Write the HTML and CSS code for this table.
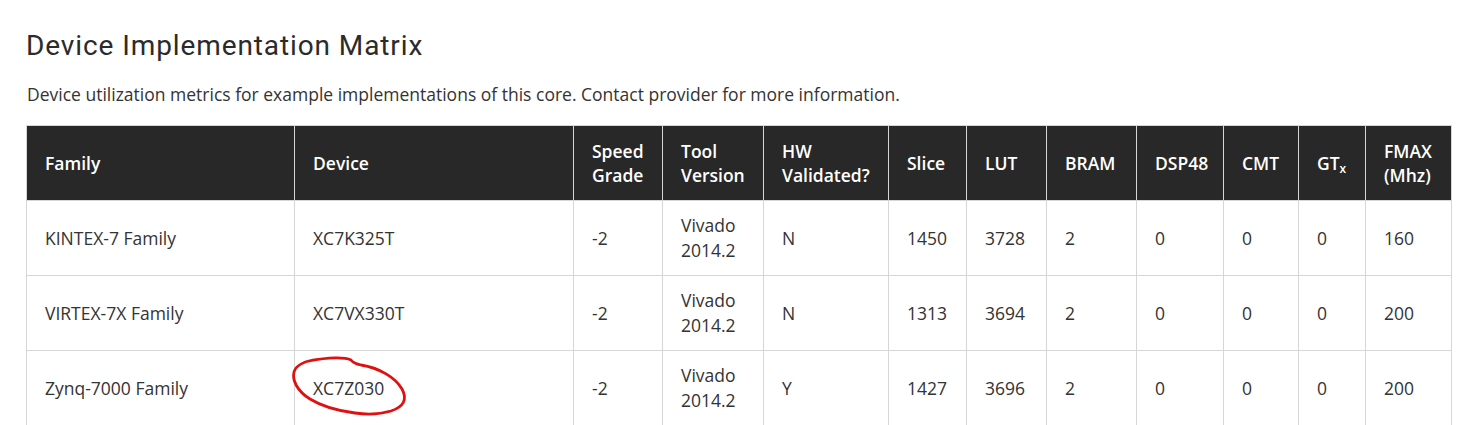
FILE: index.html
```html
<!DOCTYPE html>
<html>
<head>
<meta charset="utf-8">
<link rel="stylesheet" href="styles.css">
</head>
<body>
<div class="page">
  <h1 class="title">Device Implementation Matrix</h1>
  <p class="desc">Device utilization metrics for example implementations of this core. Contact provider for more information.</p>
  <table class="matrix">
    <colgroup>
      <col style="width:268px"><col style="width:279px"><col style="width:89px"><col style="width:101px"><col style="width:125px"><col style="width:78px"><col style="width:80px"><col style="width:90px"><col style="width:87px"><col style="width:75px"><col style="width:67px"><col style="width:86px">
    </colgroup>
    <thead>
      <tr>
        <th>Family</th><th>Device</th><th>Speed<br>Grade</th><th>Tool<br>Version</th><th>HW<br>Validated?</th><th>Slice</th><th>LUT</th><th>BRAM</th><th>DSP48</th><th>CMT</th><th>GT<sub>x</sub></th><th>FMAX<br>(Mhz)</th>
      </tr>
    </thead>
    <tbody>
      <tr>
        <td>KINTEX-7 Family</td><td>XC7K325T</td><td>-2</td><td>Vivado<br>2014.2</td><td>N</td><td>1450</td><td>3728</td><td>2</td><td>0</td><td>0</td><td>0</td><td>160</td>
      </tr>
      <tr>
        <td>VIRTEX-7X Family</td><td>XC7VX330T</td><td>-2</td><td>Vivado<br>2014.2</td><td>N</td><td>1313</td><td>3694</td><td>2</td><td>0</td><td>0</td><td>0</td><td>200</td>
      </tr>
      <tr>
        <td>Zynq-7000 Family</td><td class="marked">XC7Z030<svg class="circle" width="124" height="66" viewBox="0 0 124 66"><path d="M20 6 C 40 2, 56 2, 62 5 C 64 8, 67 9, 72 10 C 90 13, 106 22, 113 34 C 119 45, 114 52, 102 56 C 92 59, 80 60, 66 58 C 50 56, 34 52, 21 44 C 8 36, 3 25, 5 17 C 7 10, 14 7, 24 5" fill="none" stroke="#e01010" stroke-width="2.8" stroke-linecap="round" stroke-linejoin="round"/></svg></td><td>-2</td><td>Vivado<br>2014.2</td><td>Y</td><td>1427</td><td>3696</td><td>2</td><td>0</td><td>0</td><td>0</td><td>200</td>
      </tr>
    </tbody>
  </table>
</div>
</body>
</html>
```

FILE: styles.css
```css
html, body {
  margin: 0;
  padding: 0;
  background: #fff;
}
.page {
  padding: 0 29px 0 26px;
  font-family: "Open Sans", "Liberation Sans", sans-serif;
  color: #333;
}
.title {
  font-family: Roboto, "Open Sans", sans-serif;
  font-weight: 400;
  font-size: 28px;
  line-height: 34px;
  letter-spacing: 0.9px;
  margin: 0;
  padding-top: 29px;
  color: #2b2b2b;
}
.desc {
  font-size: 17.5px;
  line-height: 24px;
  margin: 19px 0 0 1px;
  color: #333;
}
.matrix {
  margin-top: 19px;
  border-collapse: collapse;
  table-layout: fixed;
  width: 1425px;
  font-size: 17.5px;
  line-height: 25px;
}
.matrix th, .matrix td {
  border: 1px solid #d6d6d6;
  text-align: left;
  vertical-align: middle;
  padding: 12px 18px;
  height: 50px;
}
.matrix th {
  background: #282828;
  color: #fff;
  font-weight: 600;
  line-height: 24px;
  border-bottom: 1px solid #d6d6d6;
}
.matrix td {
  color: #333;
}
.matrix sub {
  font-size: 12px;
  line-height: 0;
  vertical-align: -3px;
}
.marked {
  position: relative;
}
.circle {
  position: absolute;
  left: -6px;
  top: 4px;
  pointer-events: none;
}
```
